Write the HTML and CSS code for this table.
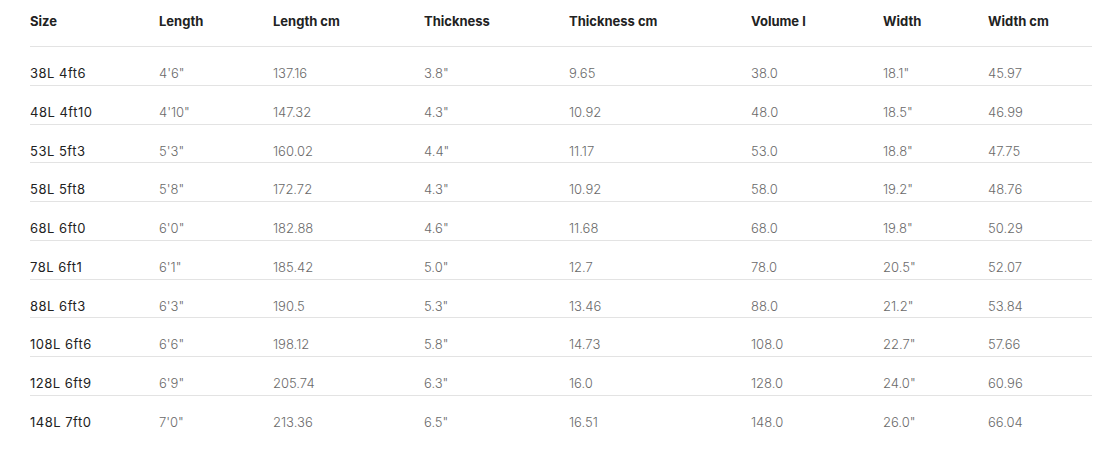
FILE: index.html
```html
<!DOCTYPE html>
<html>
<head>
<meta charset="utf-8">
<link rel="stylesheet" href="styles.css">
</head>
<body>
<div class="wrap">
<table class="specs">
<colgroup>
<col class="c1"><col class="c2"><col class="c3"><col class="c4"><col class="c5"><col class="c6"><col class="c7"><col class="c8">
</colgroup>
<thead>
<tr><th>Size</th><th>Length</th><th>Length cm</th><th>Thickness</th><th>Thickness cm</th><th>Volume l</th><th>Width</th><th>Width cm</th></tr>
</thead>
<tbody>
<tr><td>38L 4ft6</td><td>4'6"</td><td>137.16</td><td>3.8"</td><td>9.65</td><td>38.0</td><td>18.1"</td><td>45.97</td></tr>
<tr><td>48L 4ft10</td><td>4'10"</td><td>147.32</td><td>4.3"</td><td>10.92</td><td>48.0</td><td>18.5"</td><td>46.99</td></tr>
<tr><td>53L 5ft3</td><td>5'3"</td><td>160.02</td><td>4.4"</td><td>11.17</td><td>53.0</td><td>18.8"</td><td>47.75</td></tr>
<tr><td>58L 5ft8</td><td>5'8"</td><td>172.72</td><td>4.3"</td><td>10.92</td><td>58.0</td><td>19.2"</td><td>48.76</td></tr>
<tr><td>68L 6ft0</td><td>6'0"</td><td>182.88</td><td>4.6"</td><td>11.68</td><td>68.0</td><td>19.8"</td><td>50.29</td></tr>
<tr><td>78L 6ft1</td><td>6'1"</td><td>185.42</td><td>5.0"</td><td>12.7</td><td>78.0</td><td>20.5"</td><td>52.07</td></tr>
<tr><td>88L 6ft3</td><td>6'3"</td><td>190.5</td><td>5.3"</td><td>13.46</td><td>88.0</td><td>21.2"</td><td>53.84</td></tr>
<tr><td>108L 6ft6</td><td>6'6"</td><td>198.12</td><td>5.8"</td><td>14.73</td><td>108.0</td><td>22.7"</td><td>57.66</td></tr>
<tr><td>128L 6ft9</td><td>6'9"</td><td>205.74</td><td>6.3"</td><td>16.0</td><td>128.0</td><td>24.0"</td><td>60.96</td></tr>
<tr><td>148L 7ft0</td><td>7'0"</td><td>213.36</td><td>6.5"</td><td>16.51</td><td>148.0</td><td>26.0"</td><td>66.04</td></tr>
</tbody>
</table>
</div>
</body>
</html>
```
FILE: styles.css
```css
html, body {
  margin: 0;
  padding: 0;
  background: #fff;
}
.wrap {
  padding: 0 25px 0 30px;
}
.specs {
  width: 1062px;
  border-collapse: collapse;
  table-layout: fixed;
  font-family: "Inter", "Liberation Sans", sans-serif;
  font-size: 13px;
}
.c1 { width: 129px; }
.c2 { width: 114px; }
.c3 { width: 151px; }
.c4 { width: 145px; }
.c5 { width: 182px; }
.c6 { width: 132px; }
.c7 { width: 105px; }
.c8 { width: 104px; }
.specs th {
  text-align: left;
  font-weight: 700;
  color: #222;
  line-height: 16px;
  padding: 13px 0 17px 0;
  border-bottom: 1px solid #e3e3e3;
}
.specs td {
  text-align: left;
  font-weight: 300;
  color: #6a6a6a;
  line-height: 16px;
  padding: 18px 0 3.75px 0;
  border-bottom: 1px solid #e3e3e3;
}
.specs td:first-child {
  color: #222;
  font-weight: 400;
  letter-spacing: 0.5px;
}
.specs tbody tr:last-child td {
  border-bottom: none;
}
```
